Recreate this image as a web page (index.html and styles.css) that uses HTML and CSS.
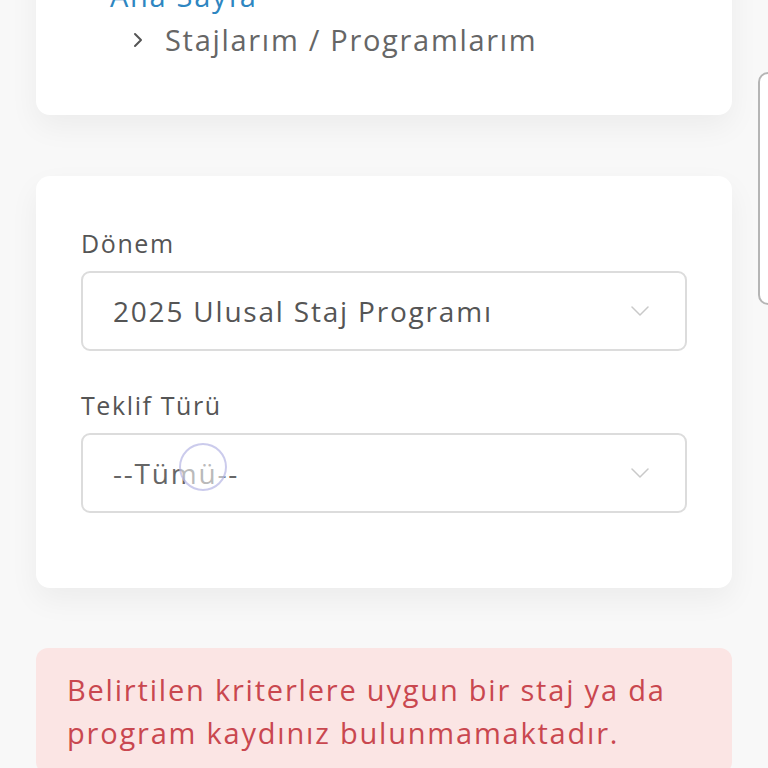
FILE: index.html
```html
<!DOCTYPE html>
<html lang="tr">
<head>
<meta charset="utf-8">
<title>Stajlarım / Programlarım</title>
<link rel="stylesheet" href="styles.css">
</head>
<body>
<main class="page">
  <section class="card crumbs-card">
    <ol class="crumbs">
      <li class="crumb crumb-home">Ana Sayfa</li>
      <li class="crumb crumb-current">
        <svg class="crumb-chev" viewBox="0 0 10 16" width="10" height="16"><path d="M2 2 L8 8 L2 14" fill="none" stroke="#555" stroke-width="2" stroke-linecap="round" stroke-linejoin="round"/></svg>
        <span>Stajlarım / Programlarım</span>
      </li>
    </ol>
  </section>

  <section class="card filter-card">
    <div class="field">
      <label class="field-label">Dönem</label>
      <div class="select">
        <span class="select-value">2025 Ulusal Staj Programı</span>
        <svg class="select-chev" viewBox="0 0 18 10" width="18" height="10"><path d="M1 1 L9 9 L17 1" fill="none" stroke="#c9c9c9" stroke-width="1.5" stroke-linecap="round" stroke-linejoin="round"/></svg>
      </div>
    </div>
    <div class="field">
      <label class="field-label">Teklif Türü</label>
      <div class="select">
        <span class="select-value placeholder">--Tümü--</span>
        <svg class="select-chev" viewBox="0 0 18 10" width="18" height="10"><path d="M1 1 L9 9 L17 1" fill="none" stroke="#c9c9c9" stroke-width="1.5" stroke-linecap="round" stroke-linejoin="round"/></svg>
        <span class="ripple"></span>
      </div>
    </div>
  </section>

  <section class="alert">
    Belirtilen kriterlere uygun bir staj ya da program kaydınız bulunmamaktadır.
  </section>
</main>
<div class="side-tab"></div>
</body>
</html>
```

FILE: styles.css
```css
html, body {
  margin: 0;
  padding: 0;
}
body {
  background: #f8f8f8;
  font-family: "Open Sans", "Noto Sans", "Liberation Sans", sans-serif;
  color: #555;
  overflow: hidden;
  height: 768px;
}
.page {
  padding: 0 36px;
  display: flex;
  flex-direction: column;
  gap: 61px;
}
.card {
  background: #fff;
  border-radius: 14px;
  box-shadow: 0 12px 30px rgba(0, 0, 0, 0.05);
}
.crumbs-card {
  margin-top: -56px;
  padding: 30px 0 53px 74px;
}
.crumbs {
  list-style: none;
  margin: 0;
  padding: 0;
  font-size: 29px;
  line-height: 44px;
  letter-spacing: 1.7px;
}
.crumb-home {
  color: #2e86c1;
}
.crumb-current {
  display: flex;
  align-items: center;
  gap: 22px;
  margin-left: 23px;
  color: #666;
}
.crumb-chev {
  flex: none;
}
.filter-card {
  padding: 50px 45px 75px 45px;
  display: flex;
  flex-direction: column;
  gap: 37px;
}
.field {
  display: flex;
  flex-direction: column;
  gap: 11px;
}
.field-label {
  font-size: 25px;
  line-height: 34px;
  letter-spacing: 1.6px;
  color: #555;
}
.select {
  position: relative;
  height: 76px;
  border: 2px solid #dcdcdc;
  border-radius: 9px;
  display: flex;
  align-items: center;
  padding: 0 36px 0 30px;
}
.select-value {
  flex: 1;
  font-size: 28px;
  letter-spacing: 1.8px;
  color: #555;
}
.select-value.placeholder {
  color: #666;
}
.select-chev {
  flex: none;
}
.ripple {
  position: absolute;
  left: 96px;
  top: 8px;
  width: 44px;
  height: 44px;
  border-radius: 50%;
  border: 2px solid rgba(160, 160, 220, 0.55);
  background: rgba(255, 255, 255, 0.55);
}
.alert {
  margin-top: -1px;
  background: #fbe5e4;
  border-radius: 12px;
  padding: 20px 31px;
  font-size: 29px;
  line-height: 43px;
  letter-spacing: 1.8px;
  color: #c9474f;
}
.side-tab {
  position: fixed;
  top: 72px;
  right: -14px;
  width: 20px;
  height: 229px;
  background: #fff;
  border: 2px solid #b5b5b5;
  border-radius: 10px;
}
```
